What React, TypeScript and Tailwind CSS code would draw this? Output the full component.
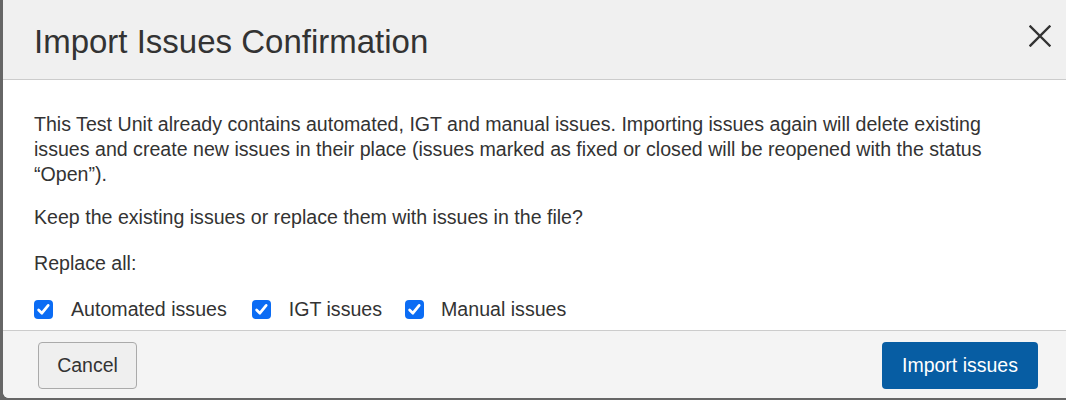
import React, { useState } from 'react';

const CheckBox: React.FC<{ checked: boolean; onChange: () => void }> = ({ checked, onChange }) => (
    <button
        type="button"
        onClick={onChange}
        className={`w-[19px] h-[19px] rounded-[4px] flex items-center justify-center shrink-0 ${checked ? 'bg-[#0b6cf4]' : 'bg-white border border-[#767676]'}`}
    >
        {checked && (
            <svg viewBox="0 0 19 19" className="w-[19px] h-[19px]">
                <path d="M4.6 10 L7.9 13.2 L14.2 5.4" fill="none" stroke="white" strokeWidth="2.7" strokeLinecap="round" strokeLinejoin="round" />
            </svg>
        )}
    </button>
);

export default function App() {
    const [types, setTypes] = useState({ automated: true, igt: true, manual: true });

    const toggle = (key: keyof typeof types) => setTypes({ ...types, [key]: !types[key] });

    return (
        <div className="w-[1066px] h-[400px] overflow-hidden bg-[#666666] font-['Liberation_Sans',Arial,sans-serif] text-[#333333]">
            <div className="ml-[3px] w-[1090px] h-[398px] bg-white rounded-bl-md overflow-hidden flex flex-col">
                <div className="h-[80px] bg-[#f0f0f0] border-b border-[#cccccc] flex items-start justify-between pl-[31px] pr-[42px] shrink-0">
                    <h3 className="text-[33px] leading-none pt-[25px]">Import Issues Confirmation</h3>
                    <button type="button" className="mt-[25px] w-[22px] h-[22px] flex items-center justify-center">
                        <svg viewBox="0 0 22 22" className="w-[22px] h-[22px]">
                            <path d="M1.5 1.5 L20.5 20.5 M20.5 1.5 L1.5 20.5" stroke="#333333" strokeWidth="2.4" strokeLinecap="square" />
                        </svg>
                    </button>
                </div>

                <div className="flex-1 pl-[31px] pt-[32px] text-[19.6px] leading-[25px]">
                    <p>
                        This Test Unit already contains automated, IGT and manual issues. Importing issues again will delete existing
                        <br />
                        issues and create new issues in their place (issues marked as fixed or closed will be reopened with the status
                        <br />
                        “Open”).
                    </p>
                    <p className="mt-[18px]">Keep the existing issues or replace them with issues in the file?</p>
                    <p className="mt-[21px]">Replace all:</p>
                    <div className="mt-[21px] flex items-center">
                        <label className="flex items-center gap-[18px] mr-[25px]">
                            <CheckBox checked={types.automated} onChange={() => toggle('automated')} />
                            <span>Automated issues</span>
                        </label>
                        <label className="flex items-center gap-[18px] mr-[23px]">
                            <CheckBox checked={types.igt} onChange={() => toggle('igt')} />
                            <span>IGT issues</span>
                        </label>
                        <label className="flex items-center gap-[17px]">
                            <CheckBox checked={types.manual} onChange={() => toggle('manual')} />
                            <span>Manual issues</span>
                        </label>
                    </div>
                </div>

                <div className="h-[68px] shrink-0 bg-[#f4f4f4] border-t border-[#cccccc] flex items-start justify-between pl-[35px] pt-[11px] pr-[55px]">
                    <button
                        type="button"
                        className="w-[99px] h-[47px] rounded-[4px] border border-[#aaaaaa] bg-[#efefef] text-[19.5px] text-[#333333]"
                    >
                        Cancel
                    </button>
                    <button
                        type="button"
                        className="w-[156px] h-[47px] rounded-[4px] bg-[#075da3] text-[19.5px] text-white"
                    >
                        Import issues
                    </button>
                </div>
            </div>
        </div>
    );
}
